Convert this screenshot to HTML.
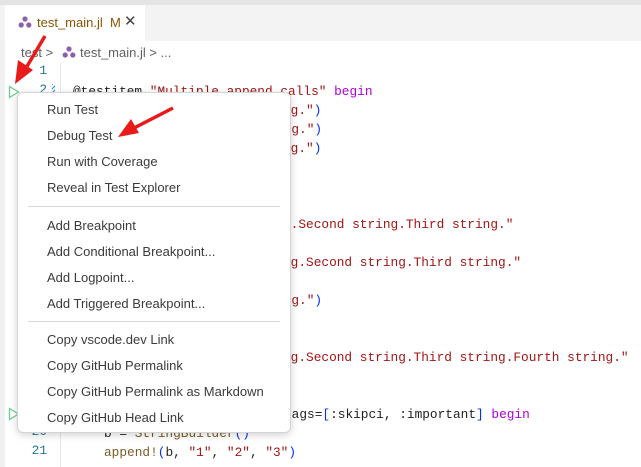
<!DOCTYPE html>
<html><head><meta charset="utf-8"><style>
*{margin:0;padding:0;box-sizing:border-box}
body{width:641px;height:467px;overflow:hidden;background:#fff;position:relative;font-family:"Liberation Sans","DejaVu Sans",sans-serif}
.a{position:absolute;white-space:pre}
.code{font-family:"Liberation Mono",monospace;font-size:12.8px;line-height:19px}
.ln{color:#237893;font-family:"Liberation Mono",monospace;font-size:12.8px;width:30px;text-align:right;left:17px}
.s{color:#a31515}.b{color:#0431fa}.k{color:#af00db}.f{color:#795e26}.t{color:#1f1f1f}
.menu{position:absolute;left:17px;top:92px;width:274px;height:341px;background:#fff;border:1px solid #d4d4d4;border-radius:6px;box-shadow:0 2px 8px rgba(0,0,0,.18)}
.mi{position:absolute;left:29px;font-size:13px;color:#3b3b3b;white-space:nowrap}
.sep{position:absolute;left:10px;right:10px;height:1px;background:#d8d8d8}
</style></head><body>
<div class="a" style="left:0;top:0;width:641px;height:5px;background:#e4e4e4"></div>
<div class="a" style="left:0;top:5px;width:641px;height:36px;background:#f3f3f3"></div>
<div class="a" style="left:5px;top:5px;width:140px;height:36px;background:#fff"></div>
<div class="a" style="left:0;top:41px;width:5px;height:426px;background:#f0f0f0"></div>
<svg class="a" style="left:18px;top:16px" width="14" height="12" viewBox="0 0 14 12"><circle cx="7" cy="3" r="2.6" fill="#8c5fa8"/><circle cx="3.2" cy="9" r="2.6" fill="#8c5fa8"/><circle cx="10.8" cy="9" r="2.6" fill="#8c5fa8"/></svg>
<div class="a" style="left:37px;top:15px;font-size:13px;color:#895503">test_main.jl&nbsp; M</div>
<div class="a" style="left:124px;top:12px;font-size:15px;color:#444">✕</div>
<div class="a" style="left:21px;top:45px;font-size:13px;color:#616161">test &gt;</div>
<svg class="a" style="left:62px;top:46px" width="14" height="12" viewBox="0 0 14 12"><circle cx="7" cy="3" r="2.6" fill="#8c5fa8"/><circle cx="3.2" cy="9" r="2.6" fill="#8c5fa8"/><circle cx="10.8" cy="9" r="2.6" fill="#8c5fa8"/></svg>
<div class="a" style="left:80px;top:45px;font-size:13px;color:#616161">test_main.jl &gt; ...</div>
<div class="a" style="left:60px;top:63px;width:1px;height:404px;background:#e5e5e5"></div>
<div class="a ln" style="top:63px">1</div>
<div class="a ln" style="top:82px">2</div>
<div class="a ln" style="top:424px">20</div>
<div class="a ln" style="top:443px">21</div>
<div class="a" style="left:52px;top:84px;width:3px;height:14px;background:repeating-linear-gradient(135deg,#1a85ff 0 1px,#fff 1px 3px)"></div>
<svg class="a" style="left:8px;top:85px" width="12" height="14"><path d="M1.5 1.5 L10.5 7 L1.5 12.5 Z" fill="none" stroke="#73c991" stroke-width="1.3"/></svg>
<svg class="a" style="left:8px;top:407px" width="12" height="14"><path d="M1.5 1.5 L10.5 7 L1.5 12.5 Z" fill="none" stroke="#73c991" stroke-width="1.3"/></svg>
<div class="a code" style="left:73px;top:82px"><span class="t">@testitem </span><span class="s">"Multiple append calls"</span> <span class="k">begin</span></div>
<div class="a code" style="left:283px;top:101px"><span class="s">ng."</span><span class="b">)</span></div>
<div class="a code" style="left:276px;top:120px"><span class="s">ing."</span><span class="b">)</span></div>
<div class="a code" style="left:283px;top:139px"><span class="s">ng."</span><span class="b">)</span></div>
<div class="a code" style="left:283px;top:215px"><span class="s">g.Second string.Third string."</span></div>
<div class="a code" style="left:283px;top:253px"><span class="s">ng.Second string.Third string."</span></div>
<div class="a code" style="left:276px;top:291px"><span class="s">ing."</span><span class="b">)</span></div>
<div class="a code" style="left:283px;top:348px"><span class="s">ng.Second string.Third string.Fourth string."</span></div>
<div class="a code" style="left:284px;top:405px"><span class="t">tags=</span><span class="b">[</span><span class="t">:skipci, :important</span><span class="b">]</span> <span class="k">begin</span></div>
<div class="a code" style="left:104px;top:424px"><span class="t">b = </span><span class="f">StringBuilder</span><span class="b">()</span></div>
<div class="a code" style="left:104px;top:443px"><span class="f">append!</span><span class="b">(</span><span class="t">b, </span><span class="s">"1"</span><span class="t">, </span><span class="s">"2"</span><span class="t">, </span><span class="s">"3"</span><span class="b">)</span></div>
<div class="menu">
<div class="mi" style="top:9px">Run Test</div>
<div class="mi" style="top:35px">Debug Test</div>
<div class="mi" style="top:61px">Run with Coverage</div>
<div class="mi" style="top:87px">Reveal in Test Explorer</div>
<div class="sep" style="top:113px"></div>
<div class="mi" style="top:125px">Add Breakpoint</div>
<div class="mi" style="top:151px">Add Conditional Breakpoint...</div>
<div class="mi" style="top:177px">Add Logpoint...</div>
<div class="mi" style="top:203px">Add Triggered Breakpoint...</div>
<div class="sep" style="top:228px"></div>
<div class="mi" style="top:239px">Copy vscode.dev Link</div>
<div class="mi" style="top:265px">Copy GitHub Permalink</div>
<div class="mi" style="top:291px">Copy GitHub Permalink as Markdown</div>
<div class="mi" style="top:317px">Copy GitHub Head Link</div>
</div>
<svg class="a" style="left:0;top:0" width="641" height="467">
<line x1="45" y1="36" x2="26" y2="68" stroke="#e81a1a" stroke-width="3.5"/>
<path d="M15 84 L18 60 L33 70 Z" fill="#e81a1a"/>
<line x1="173" y1="108" x2="134" y2="128" stroke="#e81a1a" stroke-width="3.5"/>
<path d="M118 137 L131 119 L139 133 Z" fill="#e81a1a"/>
</svg>
</body></html>
